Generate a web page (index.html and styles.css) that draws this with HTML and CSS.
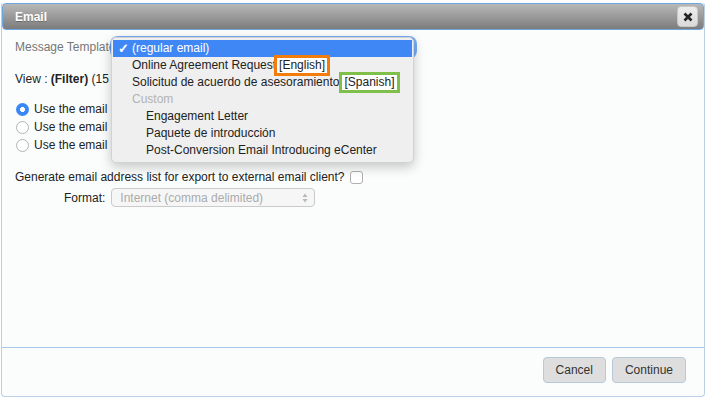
FILE: index.html
```html
<!DOCTYPE html>
<html>
<head>
<meta charset="utf-8">
<link rel="stylesheet" href="styles.css">
</head>
<body>
<div class="dialog">
  <div class="titlebar">
    <span class="title">Email</span>
    <button class="close" aria-label="Close">
      <svg width="10" height="10" viewBox="0 0 10 10"><path d="M1.5 1.5 L8.5 8.5 M8.5 1.5 L1.5 8.5" stroke="#222" stroke-width="2.6" stroke-linecap="butt"/></svg>
    </button>
  </div>
  <div class="content">
    <div class="row template-row">
      <span class="muted">Message Template</span>
      <div class="select-focus"></div>
      <div class="menu">
        <div class="item selected"><span class="check">✓</span>(regular email)</div>
        <div class="item">Online Agreement Request<span class="tag tag-en">[English]</span></div>
        <div class="item">Solicitud de acuerdo de asesoramiento<span class="tag tag-es">[Spanish]</span></div>
        <div class="item group">Custom</div>
        <div class="item sub">Engagement Letter</div>
        <div class="item sub">Paquete de introducción</div>
        <div class="item sub">Post-Conversion Email Introducing eCenter</div>
      </div>
    </div>
    <div class="row view-row"><span>View : <b>(Filter)</b> (15</span></div>
    <div class="radios">
      <div class="row radio-row"><span class="radio on"></span><span>Use the email</span></div>
      <div class="row radio-row"><span class="radio"></span><span>Use the email</span></div>
      <div class="row radio-row"><span class="radio"></span><span>Use the email</span></div>
    </div>
    <div class="row gen-row"><span>Generate email address list for export to external email client?</span><span class="checkbox"></span></div>
    <div class="row format-row">
      <span class="format-label">Format:</span>
      <div class="fselect">
        <span>Internet (comma delimited)</span>
        <svg width="6" height="10" viewBox="0 0 6 10"><path d="M3 0.5 L5.5 4 H0.5 Z M3 9.5 L5.5 6 H0.5 Z" fill="#b8b8b8"/></svg>
      </div>
    </div>
  </div>
  <div class="footer">
    <button class="btn">Cancel</button>
    <button class="btn">Continue</button>
  </div>
</div>
</body>
</html>
```

FILE: styles.css
```css
html, body {
  margin: 0;
  padding: 0;
  background: #ffffff;
  font-family: "Liberation Sans", Arial, sans-serif;
  font-size: 12px;
  color: #222;
}

.dialog {
  margin: 2px 1px 0 1px;
  width: 702px;
  height: 393px;
  border: 1px solid #b9d0e8;
  border-top-color: transparent;
  border-radius: 4px;
  background: #fbfdfd;
  display: flex;
  flex-direction: column;
}

.titlebar {
  height: 25px;
  border: 1px solid #6ea7e0;
  border-radius: 4px;
  background: linear-gradient(#b8b8b8, #7c7c7c);
  display: flex;
  align-items: center;
  justify-content: space-between;
  padding: 0 5px 0 12px;
  flex: none;
}

.title {
  color: #fff;
  font-weight: bold;
  font-size: 12px;
  text-shadow: 0 1px 0 rgba(0,0,0,0.25);
}

.close {
  width: 21px;
  height: 21px;
  border: 1px solid #c8c8c8;
  border-radius: 4px;
  background: linear-gradient(#ececec, #dadada);
  padding: 0;
  display: flex;
  align-items: center;
  justify-content: center;
}

.content {
  flex: 1;
  padding: 8px 13px 0 13px;
}

.row {
  height: 18px;
  display: flex;
  align-items: center;
  white-space: nowrap;
}

.muted { color: #777; }

.template-row {
  position: relative;
}

.select-focus {
  margin-left: -3px;
  width: 301px;
  height: 17px;
  border-radius: 5px;
  background: #f2f2f2;
  box-shadow: 0 0 0 3px rgba(74, 144, 242, 0.75);
}

.menu {
  position: absolute;
  left: 96px;
  top: -1px;
  width: 301px;
  padding: 2px 0 3px 0;
  background: #efefef;
  border: 1px solid #d2d2d2;
  border-radius: 5px;
  box-shadow: 0 4px 12px rgba(0,0,0,0.22);
  z-index: 10;
  font-size: 12px;
}

.item {
  height: 17px;
  line-height: 17px;
  padding-left: 20px;
  color: #222;
  position: relative;
  white-space: nowrap;
}

.item.selected {
  background: #3f87f5;
  color: #fff;
  margin: 0 1px;
  padding-left: 19px;
}

.check {
  position: absolute;
  left: 5px;
  top: 0;
  font-size: 13px;
  font-weight: bold;
}

.item.group { color: #b3b3b3; }
.item.sub { padding-left: 34px; }

.tag {
  display: inline-block;
  background: #fff;
  line-height: 15px;
  padding: 0 2px;
  margin-top: -4px;
  margin-bottom: -3px;
}

.tag-en {
  border: 3px solid #f27d0c;
  margin-left: -2px;
}

.tag-es {
  border: 3px solid #7fc04a;
  margin-left: 0;
}

.view-row { margin-top: 14px; }
.view-row b { font-weight: bold; }

.radios { margin-top: 12px; }

.radio {
  width: 11px;
  height: 11px;
  border: 1px solid #b4b4b4;
  border-radius: 50%;
  background: #fff;
  margin: 0 5px 0 1px;
  flex: none;
  box-sizing: content-box;
}

.radio.on {
  width: 13px;
  height: 13px;
  border: none;
  background: radial-gradient(circle, #fff 0 2.2px, #3a87f6 2.8px);
}

.gen-row { margin-top: 14px; }

.checkbox {
  width: 11px;
  height: 11px;
  border: 1px solid #b0b0b0;
  border-radius: 3px;
  background: #fff;
  margin-left: 5px;
  flex: none;
}

.format-row {
  margin-top: 2px;
  height: 19px;
  padding-left: 49px;
}

.format-label {
  margin-right: 6px;
}

.fselect {
  width: 204px;
  height: 19px;
  border: 1px solid #cacaca;
  border-radius: 4px;
  background: #f6f6f6;
  color: #ababab;
  display: flex;
  align-items: center;
  justify-content: space-between;
  padding: 0 6px 0 8px;
  box-sizing: border-box;
}

.footer {
  flex: none;
  border-top: 1px solid #a9c8e7;
  height: 49px;
  display: flex;
  justify-content: flex-end;
  align-items: flex-start;
  gap: 6px;
  padding: 9px 18px 0 0;
  box-sizing: border-box;
}

.btn {
  height: 26px;
  padding: 0 12px;
  border: 1px solid #b8c9da;
  border-radius: 4px;
  background: #dedede;
  font-family: "Liberation Sans", Arial, sans-serif;
  font-size: 12px;
  color: #333;
}
```
